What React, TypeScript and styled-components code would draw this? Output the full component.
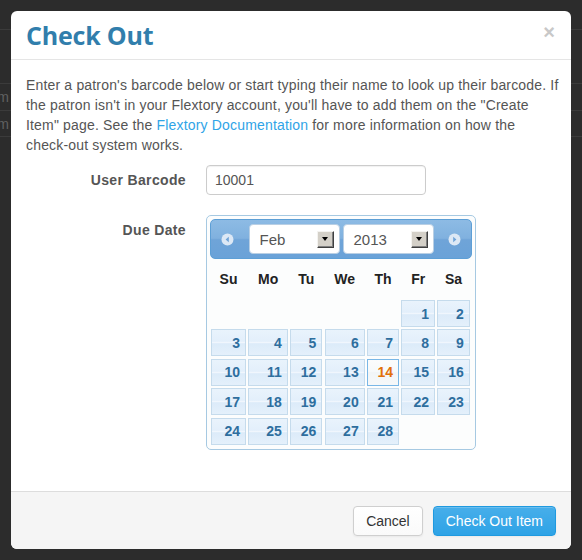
import React from "react";
import styled, { createGlobalStyle } from "styled-components";

const Global = createGlobalStyle`
  html, body { margin: 0; padding: 0; }
  body {
    background: #2c2c2c;
    font-family: "Liberation Sans", Arial, sans-serif;
    font-size: 14px;
    color: #555;
    width: 582px;
    height: 560px;
    overflow: hidden;
  }
`;

const Page = styled.div`
  position: relative;
  width: 582px;
  height: 560px;
  overflow: hidden;
`;

const BgTable = styled.div`
  padding-top: 29px;
  display: flex;
  flex-direction: column;
`;

const BgRow = styled.div<{ $h: number }>`
  height: ${(p) => p.$h}px;
  border-top: 1px solid #3b3b3b;
  box-sizing: border-box;
  display: flex;
  align-items: center;
  &:last-child { border-bottom: 1px solid #3b3b3b; }
`;

const BgCell = styled.div`
  width: 9px;
  overflow: hidden;
  display: flex;
  justify-content: flex-end;
  color: #606060;
  font-size: 14px;
  white-space: nowrap;
`;

const Modal = styled.div`
  position: absolute;
  top: 11px;
  left: 11px;
  width: 560px;
  height: 538px;
  background: #fff;
  border-radius: 6px;
  display: flex;
  flex-direction: column;
  overflow: hidden;
`;

const Header = styled.div`
  height: 48px;
  border-bottom: 1px solid #e5e5e5;
  padding: 0 15px;
  display: flex;
  align-items: center;
  justify-content: space-between;
`;

const Title = styled.h3`
  margin: 0;
  font-family: "Open Sans", "Noto Sans", sans-serif;
  font-weight: 700;
  font-size: 25px;
  letter-spacing: -0.2px;
  color: #317eac;
  line-height: 30px;
`;

const Close = styled.span`
  font-family: "Liberation Sans", Arial, sans-serif;
  font-size: 20px;
  font-weight: 700;
  line-height: 20px;
  color: #c8c8c8;
  margin-bottom: 6px;
  margin-right: 1px;
`;

const Body = styled.div`
  flex: 1;
  padding: 15px 12px 15px 15px;
`;

const Intro = styled.p`
  margin: 0 0 10px;
  line-height: 20px;
  color: #555;
  letter-spacing: 0.17px;
  white-space: nowrap;
`;

const Link = styled.a`
  color: #2fa4e7;
  text-decoration: none;
`;

const FormRow = styled.div`
  display: grid;
  grid-template-columns: 160px 1fr;
  column-gap: 20px;
  margin-bottom: 20px;
`;

const Label = styled.label`
  text-align: right;
  font-weight: 700;
  line-height: 20px;
  padding-top: 5px;
  color: #555;
  letter-spacing: 0.35px;
`;

const Input = styled.div`
  width: 220px;
  height: 30px;
  box-sizing: border-box;
  border: 1px solid #ccc;
  border-radius: 4px;
  padding: 0 8px;
  display: flex;
  align-items: center;
  color: #555;
  box-shadow: inset 0 1px 1px rgba(0, 0, 0, 0.06);
`;

const Picker = styled.div`
  width: 270px;
  box-sizing: border-box;
  border: 1px solid #a6c9e2;
  border-radius: 5px;
  background: #fcfdfd;
  padding: 3px 3px 4px;
  font-family: "Liberation Sans", Arial, sans-serif;
`;

const PickerHeader = styled.div`
  height: 40px;
  box-sizing: border-box;
  border: 1px solid #5d9fd6;
  border-radius: 5px;
  background: linear-gradient(
    #8dbbe4 0%,
    #80b1df 48%,
    #6fa4d8 52%,
    #6aa2d8 100%
  );
  display: flex;
  align-items: center;
  justify-content: space-between;
  padding: 0 10px;
`;

const NavIcon = styled.svg`
  width: 13px;
  height: 13px;
  display: block;
`;

const Selects = styled.div`
  display: flex;
  gap: 3px;
`;

const FakeSelect = styled.div`
  width: 91px;
  height: 30px;
  box-sizing: border-box;
  background: #fff;
  border: 1px solid #b9cfe4;
  border-radius: 4px;
  display: flex;
  align-items: center;
  justify-content: space-between;
  padding: 0 5px 0 10px;
  color: #555;
  font-size: 15px;
`;

const ArrowBox = styled.span`
  width: 17px;
  height: 17px;
  box-sizing: border-box;
  background: #d4d0c8;
  border-top: 1px solid #f4f3f0;
  border-left: 1px solid #f4f3f0;
  border-right: 1px solid #404040;
  border-bottom: 1px solid #404040;
  box-shadow: inset -1px -1px 0 #808080;
  display: flex;
  align-items: center;
  justify-content: center;
`;

const Tri = styled.span`
  width: 0;
  height: 0;
  border-left: 3.5px solid transparent;
  border-right: 3.5px solid transparent;
  border-top: 4px solid #000;
  margin-right: 1px;
`;

const COLS = "35px 39.5px 32px 40px 32px 33.5px 32.5px";

const DayNames = styled.div`
  display: grid;
  grid-template-columns: ${COLS};
  column-gap: 2.4px;
  padding: 0 1px;
  height: 40px;
  align-items: center;
`;

const DayName = styled.span`
  text-align: center;
  font-weight: 700;
  font-size: 14px;
  color: #222;
`;

const Weeks = styled.div`
  display: grid;
  grid-template-columns: ${COLS};
  column-gap: 2.4px;
  row-gap: 2.4px;
  padding: 1px 1px 0;
`;

const Day = styled.span<{ $today?: boolean; $empty?: boolean }>`
  height: 27px;
  box-sizing: border-box;
  display: flex;
  align-items: center;
  justify-content: flex-end;
  padding-right: 5px;
  font-weight: 700;
  font-size: 14px;
  visibility: ${(p) => (p.$empty ? "hidden" : "visible")};
  border: 1px solid ${(p) => (p.$today ? "#79b7e7" : "#c5dbec")};
  color: ${(p) => (p.$today ? "#e17009" : "#2e6e9e")};
  background: ${(p) =>
    p.$today
      ? "linear-gradient(#fbfcfc 0%, #f6f9fa 50%, #f1f5f7 50%, #f6f8f9 100%)"
      : "linear-gradient(#e9f3fc 0%, #e3effb 45%, #f0f6fd 50%, #dcebf9 55%, #e4f0fb 100%)"};
`;

const Footer = styled.div`
  height: 58px;
  box-sizing: border-box;
  border-top: 1px solid #ddd;
  background: #f5f5f5;
  padding: 0 15px;
  display: flex;
  align-items: center;
  justify-content: flex-end;
  gap: 10px;
`;

const Button = styled.button<{ $primary?: boolean }>`
  height: 30px;
  box-sizing: border-box;
  padding: 0 12px;
  font-family: "Liberation Sans", Arial, sans-serif;
  font-size: 14px;
  border-radius: 4px;
  border: 1px solid ${(p) => (p.$primary ? "#1f9ae0" : "#cfcfcf")};
  background: ${(p) =>
    p.$primary ? "linear-gradient(#47aeea, #2ea3e6)" : "linear-gradient(#fff, #fafafa)"};
  color: ${(p) => (p.$primary ? "#fff" : "#333")};
  box-shadow: inset 0 1px 0 rgba(255, 255, 255, 0.2), 0 1px 2px rgba(0, 0, 0, 0.05);
  margin-top: 1px;
`;

const NavCircle: React.FC<{ dir: "prev" | "next" }> = ({ dir }) => (
  <NavIcon viewBox="0 0 13 13">
    <circle cx="6.5" cy="6.5" r="6" fill="#dce8f5" />
    {dir === "prev" ? (
      <polygon points="7.8,3.8 7.8,9.2 4.6,6.5" fill="#6fa4d8" />
    ) : (
      <polygon points="5.2,3.8 5.2,9.2 8.4,6.5" fill="#6fa4d8" />
    )}
  </NavIcon>
);

const weeks: (number | null)[][] = [
  [null, null, null, null, null, 1, 2],
  [3, 4, 5, 6, 7, 8, 9],
  [10, 11, 12, 13, 14, 15, 16],
  [17, 18, 19, 20, 21, 22, 23],
  [24, 25, 26, 27, 28, null, null],
];

export default function App() {
  return (
    <Page>
      <Global />
      <BgTable>
        <BgRow $h={54} />
        <BgRow $h={27}>
          <BgCell>m</BgCell>
        </BgRow>
        <BgRow $h={27}>
          <BgCell>m</BgCell>
        </BgRow>
      </BgTable>
      <Modal>
        <Header>
          <Title>Check Out</Title>
          <Close>×</Close>
        </Header>
        <Body>
          <Intro>
            Enter a patron's barcode below or start typing their name to look up their barcode. If
            <br />
            the patron isn't in your Flextory account, you'll have to add them on the "Create
            <br />
            Item" page. See the <Link href="#">Flextory Documentation</Link> for more information on
            how the
            <br />
            check-out system works.
          </Intro>
          <FormRow>
            <Label>User Barcode</Label>
            <Input>10001</Input>
          </FormRow>
          <FormRow>
            <Label>Due Date</Label>
            <Picker>
              <PickerHeader>
                <NavCircle dir="prev" />
                <Selects>
                  <FakeSelect>
                    Feb
                    <ArrowBox>
                      <Tri />
                    </ArrowBox>
                  </FakeSelect>
                  <FakeSelect>
                    2013
                    <ArrowBox>
                      <Tri />
                    </ArrowBox>
                  </FakeSelect>
                </Selects>
                <NavCircle dir="next" />
              </PickerHeader>
              <DayNames>
                {["Su", "Mo", "Tu", "We", "Th", "Fr", "Sa"].map((d) => (
                  <DayName key={d}>{d}</DayName>
                ))}
              </DayNames>
              <Weeks>
                {weeks.flat().map((d, i) => (
                  <Day key={i} $empty={d === null} $today={d === 14}>
                    {d ?? ""}
                  </Day>
                ))}
              </Weeks>
            </Picker>
          </FormRow>
        </Body>
        <Footer>
          <Button>Cancel</Button>
          <Button $primary>Check Out Item</Button>
        </Footer>
      </Modal>
    </Page>
  );
}
